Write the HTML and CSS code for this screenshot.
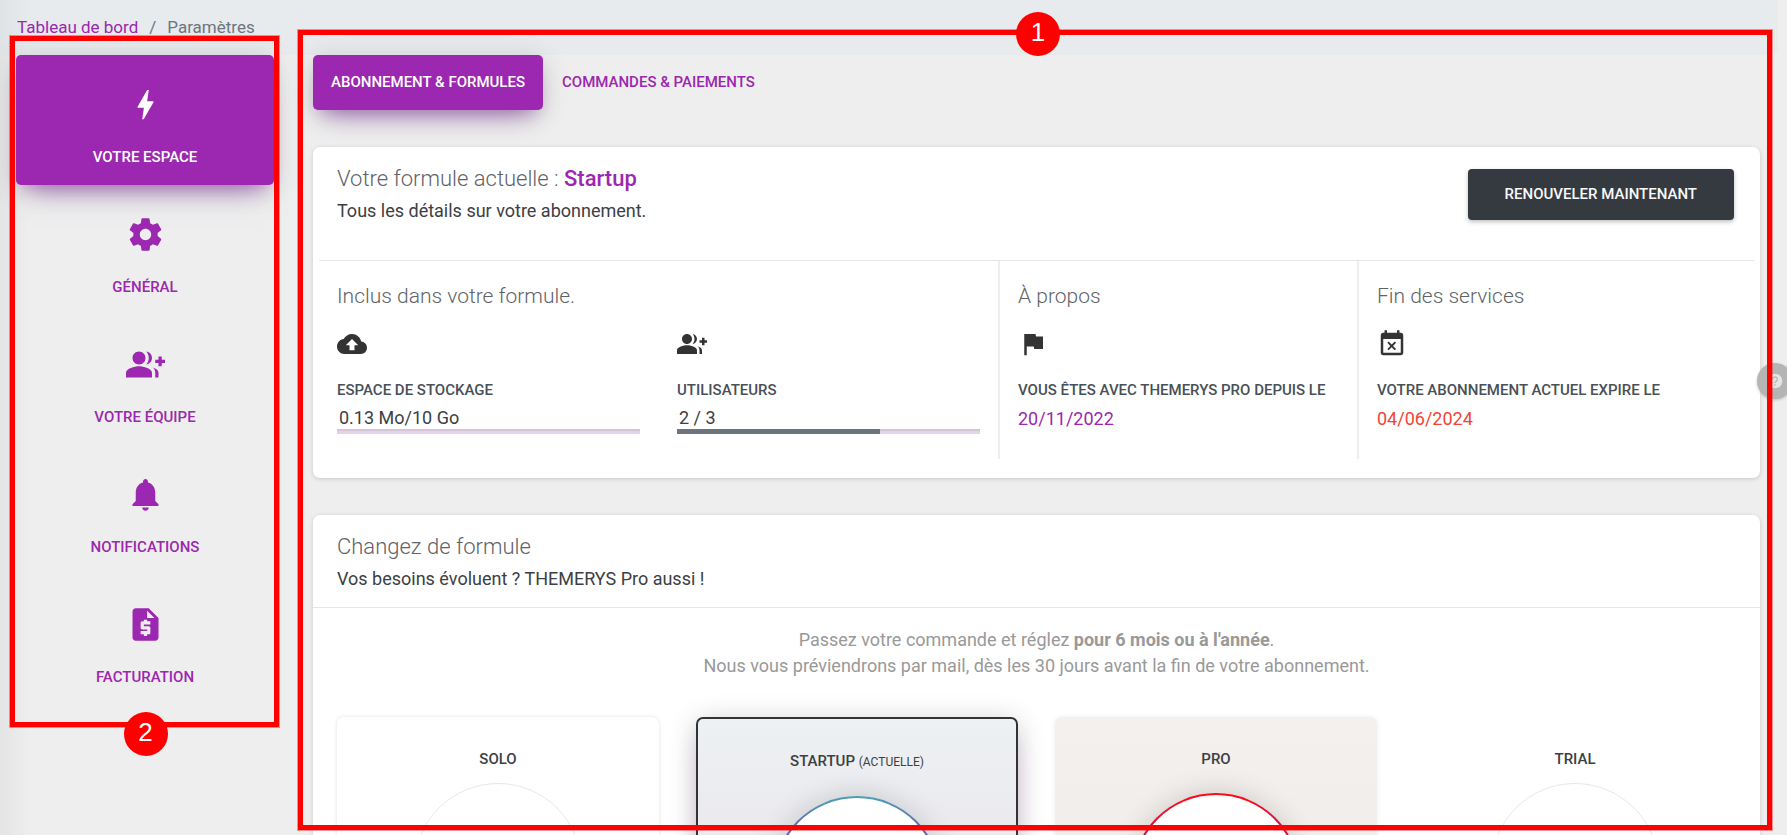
FILE: index.html
```html
<!DOCTYPE html>
<html lang="fr">
<head>
<meta charset="utf-8">
<meta name="viewport" content="width=device-width, initial-scale=1">
<title>Paramètres</title>
<link rel="stylesheet" href="styles.css">
</head>
<body>
<svg class="sprite" aria-hidden="true">
  <symbol id="group-add" viewBox="0 0 24 24"><path d="M22 9V7h-2v2h-2v2h2v2h2v-2h2V9zM8 12c2.21 0 4-1.79 4-4s-1.79-4-4-4-4 1.79-4 4 1.79 4 4 4zM8 13c-2.67 0-8 1.34-8 4v3h16v-3c0-2.66-5.33-4-8-4zM12.51 4.05C13.43 5.11 14 6.49 14 8s-.57 2.89-1.49 3.95C14.47 11.7 16 10.04 16 8s-1.53-3.7-3.49-3.95zM16.53 13.83C17.42 14.66 18 15.7 18 17v3h2v-3c0-1.45-1.59-2.51-3.47-3.17z"/></symbol>
</svg>
<div class="page">
  <header class="topbar">
    <nav class="breadcrumb" aria-label="Fil d'Ariane">
      <a href="#">Tableau de bord</a><span class="sep">/</span><span>Paramètres</span>
    </nav>
  </header>
  <div class="layout">
    <aside class="sidebar">
      <nav class="side-nav">
        <a class="side-item active" href="#"><svg viewBox="0 0 24 24"><path d="M11 21h-1l1-7H7.5c-.88 0-.33-.75-.31-.78C8.48 10.94 10.42 7.54 13.01 3h1l-1 7h3.51c.4 0 .62.19.4.66C12.97 17.55 11 21 11 21z"/></svg>Votre espace</a>
        <a class="side-item" href="#"><svg viewBox="0 0 24 24"><path d="M19.43 12.98c.04-.32.07-.64.07-.98s-.03-.66-.07-.98l2.11-1.65c.19-.15.24-.42.12-.64l-2-3.46c-.12-.22-.39-.3-.61-.22l-2.49 1c-.52-.4-1.08-.73-1.69-.98l-.38-2.65C14.46 2.18 14.25 2 14 2h-4c-.25 0-.46.18-.49.42l-.38 2.65c-.61.25-1.17.59-1.69.98l-2.49-1c-.23-.09-.49 0-.61.22l-2 3.46c-.13.22-.07.49.12.64l2.11 1.65c-.04.32-.07.65-.07.98s.03.66.07.98l-2.11 1.65c-.19.15-.24.42-.12.64l2 3.46c.12.22.39.3.61.22l2.49-1c.52.4 1.08.73 1.69.98l.38 2.65c.03.24.24.42.49.42h4c.25 0 .46-.18.49-.42l.38-2.65c.61-.25 1.17-.59 1.69-.98l2.49 1c.23.09.49 0 .61-.22l2-3.46c.12-.22.07-.49-.12-.64l-2.11-1.65zM12 15.5c-1.93 0-3.5-1.57-3.5-3.5s1.57-3.5 3.5-3.5 3.5 1.57 3.5 3.5-1.57 3.5-3.5 3.5z"/></svg>Général</a>
        <a class="side-item" href="#"><svg viewBox="0 0 24 24"><use href="#group-add"/></svg>Votre équipe</a>
        <a class="side-item" href="#"><svg viewBox="0 0 24 24"><path d="M12 22c1.1 0 2-.9 2-2h-4c0 1.1.89 2 2 2zm6-6v-5c0-3.07-1.64-5.64-4.5-6.32V4c0-.83-.67-1.5-1.5-1.5s-1.5.67-1.5 1.5v.68C7.63 5.36 6 7.92 6 11v5l-2 2v1h16v-1l-2-2z"/></svg>Notifications</a>
        <a class="side-item" href="#"><svg viewBox="0 0 24 24"><path d="M14 2H6c-1.1 0-1.99.9-1.99 2L4 20c0 1.1.89 2 1.99 2H18c1.1 0 2-.9 2-2V8l-6-6zm1 10h-4v1h3c.55 0 1 .45 1 1v3c0 .55-.45 1-1 1h-1v1h-2v-1H9v-2h4v-1h-3c-.55 0-1-.45-1-1v-3c0-.55.45-1 1-1h1V9h2v1h2v2zm-2-4V3.5L17.5 8H13z"/></svg>Facturation</a>
      </nav>
      <div class="marker marker-side"><span class="badge">2</span></div>
    </aside>
    <main class="content">
      <nav class="tabs">
        <a class="tab active" href="#">Abonnement &amp; formules</a>
        <a class="tab" href="#">Commandes &amp; paiements</a>
      </nav>

      <section class="card current">
        <div class="card-head">
          <div>
            <h2>Votre formule actuelle : <strong>Startup</strong></h2>
            <p>Tous les détails sur votre abonnement.</p>
          </div>
          <button class="renew" type="button">Renouveler maintenant</button>
        </div>
        <div class="details">
          <div class="detail">
            <h3>Inclus dans votre formule.</h3>
            <div class="quotas">
              <div>
                <svg class="icon" viewBox="0 0 24 24"><path d="M19.35 10.04C18.67 6.59 15.64 4 12 4 9.11 4 6.6 5.64 5.35 8.04 2.34 8.36 0 10.91 0 14c0 3.31 2.69 6 6 6h13c2.76 0 5-2.24 5-5 0-2.64-2.05-4.78-4.65-4.96zM14 13v4h-4v-4H7l5-5 5 5h-3z"/></svg>
                <h4>Espace de stockage</h4>
                <div class="value amount">0.13 Mo/10 Go</div>
                <div class="bar"><div class="fill" style="width:0%"></div></div>
              </div>
              <div>
                <svg class="icon" viewBox="0 0 24 24"><use href="#group-add"/></svg>
                <h4>Utilisateurs</h4>
                <div class="value amount">2 / 3</div>
                <div class="bar"><div class="fill" style="width:67%"></div></div>
              </div>
            </div>
          </div>
          <div class="detail">
            <h3>À propos</h3>
            <svg class="icon" viewBox="0 0 24 24"><path d="M14.4 6L14 4H5v17h2v-7h5.6l.4 2h7V6z"/></svg>
            <h4>Vous êtes avec THEMERYS Pro depuis le</h4>
            <div class="value since">20/11/2022</div>
          </div>
          <div class="detail">
            <h3>Fin des services</h3>
            <svg class="icon" viewBox="0 0 24 24"><path d="M9.31 17l2.44-2.44L14.19 17l1.06-1.06-2.44-2.44 2.44-2.44L14.19 10l-2.44 2.44L9.31 10l-1.06 1.06 2.44 2.44-2.44 2.44L9.31 17zM19 3h-1V1h-2v2H8V1H6v2H5c-1.11 0-1.99.9-1.99 2L3 19c0 1.1.89 2 2 2h14c1.1 0 2-.9 2-2V5c0-1.1-.9-2-2-2zm0 16H5V8h14v11z"/></svg>
            <h4>Votre abonnement actuel expire le</h4>
            <div class="value expiry">04/06/2024</div>
          </div>
        </div>
      </section>

      <section class="card change">
        <div class="card-head ruled">
          <div>
            <h2>Changez de formule</h2>
            <p>Vos besoins évoluent ? THEMERYS Pro aussi !</p>
          </div>
        </div>
        <p class="notice">Passez votre commande et réglez <strong>pour 6 mois ou à l'année</strong>.<br>Nous vous préviendrons par mail, dès les 30 jours avant la fin de votre abonnement.</p>
        <div class="plans">
          <article class="plan solo"><h4>Solo</h4><div class="disc"></div></article>
          <article class="plan startup"><h4>Startup <small>(actuelle)</small></h4><div class="disc"></div></article>
          <article class="plan pro"><h4>Pro</h4><div class="disc"></div></article>
          <article class="plan trial"><h4>Trial</h4><div class="disc"></div></article>
        </div>
      </section>
      <div class="marker marker-main"><span class="badge">1</span></div>
    </main>
  </div>
  <button class="help" type="button" aria-label="Aide"><svg viewBox="0 0 24 24"><circle cx="12" cy="12" r="11" fill="#e4e4e4"/><path d="M8.500 9.500a3.500 3.500 0 1 1 5.500 2.800c-1.300.9-2 1.400-2 2.700M12 17v2" fill="none" stroke="#b5b5b5" stroke-width="2"/></svg></button>
</div>
</body>
</html>
```
FILE: styles.css
```css
* { box-sizing: border-box; }

body {
  margin: 0;
  background: #eee;
  color: #3c4043;
  font: 400 18px/26px Roboto, "Liberation Sans", sans-serif;
}

h2, h3, h4, p { margin: 0; }
a { color: #9c27b0; text-decoration: none; }
svg { display: block; fill: currentColor; }
.sprite { display: none; }

.page {
  position: relative;
  display: flex;
  flex-direction: column;
  height: 100vh;
  overflow: hidden;
  background: linear-gradient(to right, #e4e4e4, #eee 30px);
}

.topbar {
  height: 55px;
  margin-right: 9px;
  padding: 14px 17px 0;
  border-radius: 0 0 4px 0;
  background: linear-gradient(to right, #e0e3e6, #e7ebee 30px);
}

.breadcrumb { color: #6c757d; font-size: 17px; }
.sep { margin: 0 11px; }

.layout {
  display: flex;
  flex: 1;
  gap: 39px;
  min-height: 0;
  padding: 0 27px 0 16px;
}

.sidebar {
  position: relative;
  flex: 0 0 258px;
  align-self: flex-start;
}

.side-item {
  display: flex;
  flex-direction: column;
  align-items: center;
  gap: 20px;
  height: 130px;
  padding-top: 30px;
  border-radius: 5px;
  font-size: 15px;
  font-weight: 500;
  text-transform: uppercase;
}

.side-item svg { width: 39px; height: 39px; }

.active {
  background: #9c27b0;
  color: #fff;
  box-shadow: 0 18px 26px -14px rgba(120, 30, 150, .5), 0 4px 28px rgba(0, 0, 0, .14), 0 8px 14px -6px rgba(120, 30, 150, .25);
}

.content {
  position: relative;
  flex: 1;
  min-width: 0;
}

.tabs { display: flex; gap: 1px; }

.tab {
  padding: 14px 18px 15px;
  border-radius: 5px;
  font-size: 15px;
  font-weight: 500;
  text-transform: uppercase;
}

.card {
  border-radius: 7px;
  background: #fff;
  box-shadow: 0 1px 4px rgba(0, 0, 0, .16);
}

.current { margin-top: 37px; padding-bottom: 19px; }
.change { margin-top: 37px; }

.card-head {
  display: flex;
  justify-content: space-between;
  align-items: flex-start;
  padding: 17px 26px 0 24px;
}

.card-head p { margin-top: 4px; }
.ruled { padding-bottom: 15px; border-bottom: 1px solid #e3e6ea; }

h2, h3 { color: #5f6368; font-weight: 300; }
h2 { font-size: 22px; line-height: 30px; }
h2 strong { color: #9c27b0; font-weight: 500; }
h3 { font-size: 21px; line-height: 30px; }

.renew {
  height: 51px;
  margin-top: 5px;
  padding: 0 37px 2px;
  border: 0;
  border-radius: 4px;
  background: #343a40;
  color: #f8f9fa;
  font: 500 15px/20px Roboto, "Liberation Sans", sans-serif;
  text-transform: uppercase;
  box-shadow: 0 2px 4px rgba(0, 0, 0, .25);
}

.details {
  display: grid;
  grid-template-columns: 681fr 359fr 395fr;
  margin: 36px 6px 0;
  border-top: 1px solid #e3e6ea;
}

.detail {
  min-height: 198px;
  padding: 20px 18px 0;
  border-right: 2px solid #eee;
}

.detail:last-child { border-right: 0; }

.quotas {
  display: grid;
  grid-template-columns: 1fr 1fr;
  gap: 37px;
}

.icon {
  width: 30px;
  height: 30px;
  margin-top: 18px;
  color: #333;
}

h4 {
  font-size: 15px;
  font-weight: 500;
  line-height: 20px;
  text-transform: uppercase;
}

.icon + h4 { margin-top: 21px; color: #495057; }
.value { margin-top: 6px; }
.amount { padding-left: 2px; line-height: 23px; }
.since { color: #9c27b0; }
.expiry { color: #f44336; }

.bar {
  height: 5px;
  background: #e6d2ea;
  box-shadow: inset 0 2px 1px rgba(0, 0, 0, .07);
}

.fill { height: 100%; background: #6c757d; }

.notice {
  padding: 19px 25px 0;
  color: #999;
  text-align: center;
}

.plans {
  display: grid;
  grid-template-columns: repeat(4, 1fr);
  gap: 37px;
  padding: 38px 24px;
}

.plan {
  display: flex;
  flex-direction: column;
  align-items: center;
  gap: 14px;
  height: 400px;
  padding-top: 32px;
  border-radius: 7px;
}

.plan small { font-size: 12px; font-weight: 400; }
.solo { box-shadow: 0 0 4px rgba(0, 0, 0, .12); }

.disc {
  width: 168px;
  height: 168px;
  border: 1px solid #e8e8e8;
  border-radius: 50%;
  background: #fff;
}

.startup {
  gap: 24px;
  border: 2px solid #333;
  background: linear-gradient(#edf1f3, #ebebef 90px, #e6e2ea);
  box-shadow: 0 18px 24px -10px rgba(156, 39, 176, .4), 0 4px 28px rgba(0, 0, 0, .2);
}

.startup .disc {
  border: 2px solid transparent;
  background: linear-gradient(#fff, #fff) padding-box, linear-gradient(#4a9fb5, #6a5cb0 40px, #9c27b0) border-box;
  box-shadow: 0 0 28px rgba(0, 0, 0, .16);
}

.pro {
  gap: 24px;
  background: linear-gradient(#f3f0ed, #ece8e5);
  box-shadow: 0 0 5px rgba(0, 0, 0, .08);
}

.pro .disc {
  border: 2px solid transparent;
  background: linear-gradient(#fff, #fff) padding-box, linear-gradient(#ff0a14, #c8104e 50px, #9c27b0) border-box;
  box-shadow: 0 0 28px rgba(0, 0, 0, .16);
}

.help {
  position: absolute;
  top: 363px;
  right: -6px;
  width: 36px;
  height: 36px;
  padding: 0 0 0 10px;
  border: 0;
  border-radius: 50%;
  background: #b5b5b5;
  box-shadow: 0 1px 3px rgba(0, 0, 0, .2);
}

.help svg { width: 16px; height: 16px; }

.marker {
  position: absolute;
  z-index: 2;
  display: flex;
  justify-content: center;
  border: 5px solid #f00;
  box-shadow: 0 0 0 1px rgba(255, 0, 0, .4);
  pointer-events: none;
}

.marker-side { inset: -19px -5px -22px -6px; align-items: flex-end; padding-left: 2px; }
.marker-main { inset: -25px -12px 5px -15px; align-items: flex-start; padding-left: 6px; }

.badge {
  width: 44px;
  height: 44px;
  border-radius: 50%;
  background: #f00;
  color: #fff;
  font: 400 26px/40px "Liberation Sans", Arial, sans-serif;
  text-align: center;
}

.marker-side .badge { margin-bottom: -34px; }
.marker-main .badge { margin-top: -23px; }
```
